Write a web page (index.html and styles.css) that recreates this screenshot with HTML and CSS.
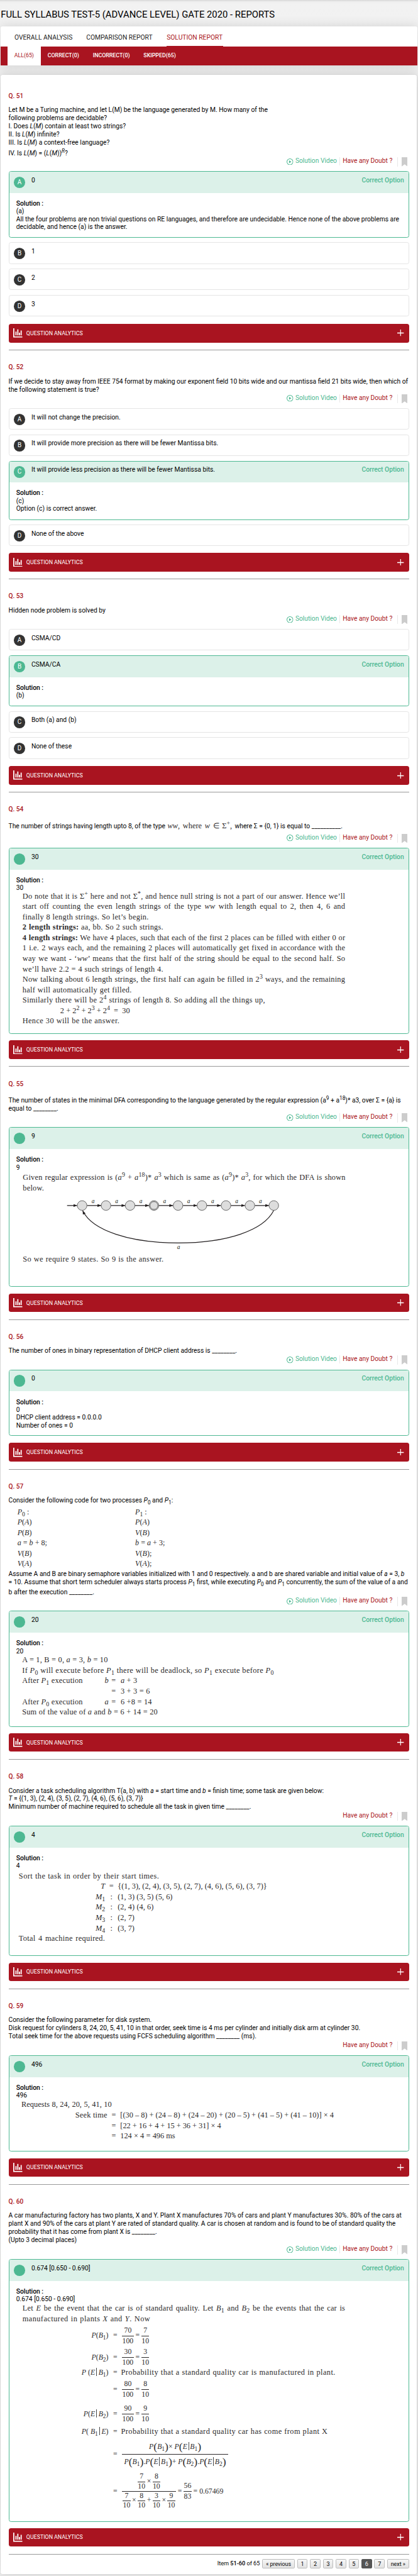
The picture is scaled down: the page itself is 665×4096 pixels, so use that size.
FILE: index.html
```html
<!DOCTYPE html>
<html lang="en">
<head>
<meta charset="utf-8">
<title>Full Syllabus Test-5 - Reports</title>
<link rel="stylesheet" href="styles.css">
</head>
<body>
<div class="page">
  <svg class="defs" width="0" height="0">
    <symbol id="play" viewBox="0 0 18 18"><circle cx="9" cy="9" r="8.1" fill="none" stroke="#4db892" stroke-width="1.7"/><path d="M6.6 5.2 12.8 9l-6.2 3.8z" fill="#4db892"/></symbol>
    <symbol id="mark" viewBox="0 0 16 25"><path d="M0 0h16v25l-8-6-8 6z" fill="#ccc"/></symbol>
    <symbol id="chart" viewBox="0 0 25 25"><path d="M0 0h3v22h22v3H0zM6 9h3v10H6zM11 3h3v16h-3zM15.500 12h3v7h-3zM20 6h3v13h-3z" fill="#fff"/></symbol>
    <symbol id="plus" viewBox="0 0 18 18"><path d="M8 0h2v8h8v2.500h-8V18H8v-7.500H0V8h8z" fill="#fff"/></symbol>
  </svg>
  <h1 class="title">FULL SYLLABUS TEST-5 (ADVANCE LEVEL) GATE 2020 - REPORTS</h1>
  <div class="tabs-card">
    <nav class="tabs"><a class="w1">OVERALL ANALYSIS</a><a class="w2">COMPARISON REPORT</a><a class="w3 active">SOLUTION REPORT</a></nav>
    <nav class="filters"><a class="active">ALL(65)</a><a>CORRECT(0)</a><a>INCORRECT(0)</a><a>SKIPPED(65)</a></nav>
  </div>
  <main class="card">

    <article class="question q51">
      <h2>Q. 51</h2>
      <div class="stem">
        <div>Let M be a Turing machine, and let L(M) be the language generated by M. How many of the</div>
        <div>following problems are decidable?</div>
        <div>I. Does <i>L</i>(<i>M</i>) contain at least two strings?</div>
        <div>II. Is <i>L</i>(<i>M</i>) infinite?</div>
        <div>III. Is <i>L</i>(<i>M</i>) a context-free language?</div>
        <div class="drop">IV. Is <i>L</i>(<i>M</i>) = (<i>L</i>(<i>M</i>))<sup><i>R</i></sup>?</div>
      </div>
      <div class="actions"><span class="video"><svg><use href="#play"/></svg>Solution Video</span><span class="doubt">Have any Doubt ?</span><span class="mark"><svg><use href="#mark"/></svg></span></div>
      <div class="options">
        <section class="option correct">
          <header><b class="dot">A</b><span>0</span><em>Correct Option</em></header>
          <div class="solution"><strong>Solution :</strong><div>(a)</div><div>All the four problems are non trivial questions on RE languages, and therefore are undecidable. Hence none of the above problems are</div><div>decidable, and hence (a) is the answer.</div></div>
        </section>
        <section class="option"><header><b class="dot">B</b><span>1</span></header></section>
        <section class="option"><header><b class="dot">C</b><span>2</span></header></section>
        <section class="option"><header><b class="dot">D</b><span>3</span></header></section>
      </div>
      <div class="analytics"><svg class="chart"><use href="#chart"/></svg><span>QUESTION ANALYTICS</span><svg class="plus"><use href="#plus"/></svg></div>
    </article>

    <article class="question q52">
      <h2>Q. 52</h2>
      <div class="stem">
        <div>If we decide to stay away from IEEE 754 format by making our exponent field 10 bits wide and our mantissa field 21 bits wide, then which of</div>
        <div>the following statement is true?</div>
      </div>
      <div class="actions"><span class="video"><svg><use href="#play"/></svg>Solution Video</span><span class="doubt">Have any Doubt ?</span><span class="mark"><svg><use href="#mark"/></svg></span></div>
      <div class="options">
        <section class="option"><header><b class="dot">A</b><span>It will not change the precision.</span></header></section>
        <section class="option"><header><b class="dot">B</b><span>It will provide more precision as there will be fewer Mantissa bits.</span></header></section>
        <section class="option correct">
          <header><b class="dot">C</b><span>It will provide less precision as there will be fewer Mantissa bits.</span><em>Correct Option</em></header>
          <div class="solution"><strong>Solution :</strong><div>(c)</div><div>Option (c) is correct answer.</div></div>
        </section>
        <section class="option"><header><b class="dot">D</b><span>None of the above</span></header></section>
      </div>
      <div class="analytics"><svg class="chart"><use href="#chart"/></svg><span>QUESTION ANALYTICS</span><svg class="plus"><use href="#plus"/></svg></div>
    </article>

    <article class="question q53">
      <h2>Q. 53</h2>
      <div class="stem"><div>Hidden node problem is solved by</div></div>
      <div class="actions"><span class="video"><svg><use href="#play"/></svg>Solution Video</span><span class="doubt">Have any Doubt ?</span><span class="mark"><svg><use href="#mark"/></svg></span></div>
      <div class="options">
        <section class="option"><header><b class="dot">A</b><span>CSMA/CD</span></header></section>
        <section class="option correct">
          <header><b class="dot">B</b><span>CSMA/CA</span><em>Correct Option</em></header>
          <div class="solution"><strong>Solution :</strong><div>(b)</div></div>
        </section>
        <section class="option"><header><b class="dot">C</b><span>Both (a) and (b)</span></header></section>
        <section class="option"><header><b class="dot">D</b><span>None of these</span></header></section>
      </div>
      <div class="analytics"><svg class="chart"><use href="#chart"/></svg><span>QUESTION ANALYTICS</span><svg class="plus"><use href="#plus"/></svg></div>
    </article>

    <article class="question q54">
      <h2>Q. 54</h2>
      <div class="stem"><div>The number of strings having length upto 8, of the type <span class="formula"><i>ww</i>, where <i>w</i> ∈ Σ<sup>+</sup>,</span> where Σ = {0, 1} is equal to __________.</div></div>
      <div class="actions"><span class="video"><svg><use href="#play"/></svg>Solution Video</span><span class="doubt">Have any Doubt ?</span><span class="mark"><svg><use href="#mark"/></svg></span></div>
      <div class="options">
        <section class="option correct">
          <header><b class="dot"></b><span>30</span><em>Correct Option</em></header>
          <div class="solution"><strong>Solution :</strong><div>30</div>
            <div class="working">
              <p class="full">Do note that it is Σ<sup>+</sup> here and not Σ<sup>*</sup>, and hence null string is not a part of our answer. Hence we’ll</p>
              <p class="full">start off counting the even length strings of the type <i>ww</i> with length equal to 2, then 4, 6 and</p>
              <p class="l3">finally 8 length strings. So let’s begin.</p>
              <p class="l4"><b>2 length strings:</b> aa, bb. So 2 such strings.</p>
              <p class="full tight"><b>4 length strings:</b> We have 4 places, such that each of the first 2 places can be filled with either 0 or</p>
              <p class="full">1 i.e. 2 ways each, and the remaining 2 places will automatically get fixed in accordance with the</p>
              <p class="full">way we want - ‘<i>ww</i>’ means that the first half of the string should be equal to the second half. So</p>
              <p class="l8">we’ll have 2.2 = 4 such strings of length 4.</p>
              <p class="full">Now talking about 6 length strings, the first half can again be filled in 2<sup>3</sup> ways, and the remaining</p>
              <p class="l10">half will automatically get filled.</p>
              <p class="l11">Similarly there will be 2<sup>4</sup> strings of length 8. So adding all the things up,</p>
              <p class="l12">2 + 2<sup>2</sup> + 2<sup>3</sup> + 2<sup>4</sup> &nbsp;=&nbsp; 30</p>
              <p class="l13">Hence 30 will be the answer.</p>
            </div>
          </div>
        </section>
      </div>
      <div class="analytics"><svg class="chart"><use href="#chart"/></svg><span>QUESTION ANALYTICS</span><svg class="plus"><use href="#plus"/></svg></div>
    </article>

    <article class="question q55">
      <h2>Q. 55</h2>
      <div class="stem"><div>The number of states in the minimal DFA corresponding to the language generated by the regular expression (a<sup>9</sup> + a<sup>18</sup>)* a3, over Σ = {a} is</div><div>equal to ________.</div></div>
      <div class="actions"><span class="video"><svg><use href="#play"/></svg>Solution Video</span><span class="doubt">Have any Doubt ?</span><span class="mark"><svg><use href="#mark"/></svg></span></div>
      <div class="options">
        <section class="option correct">
          <header><b class="dot"></b><span>9</span><em>Correct Option</em></header>
          <div class="solution"><strong>Solution :</strong><div>9</div>
            <div class="working">
              <p class="full">Given regular expression is (<i>a</i><sup>9</sup> + <i>a</i><sup>18</sup>)* <i>a</i><sup>3</sup> which is same as (<i>a</i><sup>9</sup>)* <i>a</i><sup>3</sup>, for which the DFA is shown</p>
              <p class="b1">below.</p>
              <svg class="dfa" viewBox="60 0 720 164">
                <defs><marker id="tip" viewBox="0 0 10 8" refX="10" refY="4" markerWidth="10" markerHeight="8" markerUnits="userSpaceOnUse" orient="auto"><path d="M0 0 10 4 0 8z" fill="#231f20"/></marker></defs>
                <g stroke="#231f20" stroke-width="2">
                  <path d="M180 32h27" marker-end="url(#tip)"/><path d="M234 32h38" marker-end="url(#tip)"/><path d="M298 32h39" marker-end="url(#tip)"/><path d="M363 32h38" marker-end="url(#tip)"/><path d="M428 32h38" marker-end="url(#tip)"/><path d="M493 32h38" marker-end="url(#tip)"/><path d="M557 32h38" marker-end="url(#tip)"/><path d="M622 32h38" marker-end="url(#tip)"/><path d="M687 32h38" marker-end="url(#tip)"/>
                  <path d="M738 45C710 100 610 133 480 133C350 133 248 100 222 46" fill="none" marker-end="url(#tip)"/>
                </g>
                <g fill="#ddd" stroke="#555" stroke-width="1.500">
                  <circle cx="220.500" cy="32" r="13"/><circle cx="285" cy="32" r="13"/><circle cx="350" cy="32" r="13"/><circle cx="414.500" cy="32" r="13"/><circle cx="414.500" cy="32" r="10.500"/><circle cx="479.500" cy="32" r="13"/><circle cx="544" cy="32" r="13"/><circle cx="609" cy="32" r="13"/><circle cx="673.500" cy="32" r="13"/><circle cx="738" cy="32" r="13"/>
                </g>
                <g class="edge"><text x="250" y="25">a</text><text x="314" y="25">a</text><text x="379" y="25">a</text><text x="443" y="25">a</text><text x="508" y="25">a</text><text x="573" y="25">a</text><text x="638" y="25">a</text><text x="702" y="25">a</text><text x="481" y="149">a</text></g>
              </svg>
              <p class="b2">So we require 9 states. So 9 is the answer.</p>
            </div>
          </div>
        </section>
      </div>
      <div class="analytics"><svg class="chart"><use href="#chart"/></svg><span>QUESTION ANALYTICS</span><svg class="plus"><use href="#plus"/></svg></div>
    </article>

    <article class="question q56">
      <h2>Q. 56</h2>
      <div class="stem"><div>The number of ones in binary representation of DHCP client address is ________.</div></div>
      <div class="actions"><span class="video"><svg><use href="#play"/></svg>Solution Video</span><span class="doubt">Have any Doubt ?</span><span class="mark"><svg><use href="#mark"/></svg></span></div>
      <div class="options">
        <section class="option correct">
          <header><b class="dot"></b><span>0</span><em>Correct Option</em></header>
          <div class="solution"><strong>Solution :</strong><div>0</div><div>DHCP client address = 0.0.0.0</div><div>Number of ones = 0</div></div>
        </section>
      </div>
      <div class="analytics"><svg class="chart"><use href="#chart"/></svg><span>QUESTION ANALYTICS</span><svg class="plus"><use href="#plus"/></svg></div>
    </article>

    <article class="question q57">
      <h2>Q. 57</h2>
      <div class="stem">
        <div>Consider the following code for two processes <i>P</i><sub>0</sub> and <i>P</i><sub>1</sub>:</div>
        <div class="code">
          <p><i>P</i><sub>0</sub> :</p><p><i>P</i><sub>1</sub> :</p>
          <p><i>P</i>(<i>A</i>)</p><p><i>P</i>(<i>A</i>)</p>
          <p><i>P</i>(<i>B</i>)</p><p><i>V</i>(<i>B</i>)</p>
          <p><i>a</i> = <i>b</i> + 8;</p><p><i>b</i> = <i>a</i> + 3;</p>
          <p><i>V</i>(<i>B</i>)</p><p><i>V</i>(<i>B</i>);</p>
          <p><i>V</i>(<i>A</i>)</p><p><i>V</i>(<i>A</i>);</p>
        </div>
        <div>Assume A and B are binary semaphore variables initialized with 1 and 0 respectively. a and b are shared variable and initial value of <i>a</i> = 3, <i>b</i></div>
        <div>= 10. Assume that short term scheduler always starts process <i>P</i><sub>1</sub> first, while executing <i>P</i><sub>0</sub> and <i>P</i><sub>1</sub> concurrently, the sum of the value of a and</div>
        <div class="drop">b after the execution ________.</div>
      </div>
      <div class="actions"><span class="video"><svg><use href="#play"/></svg>Solution Video</span><span class="doubt">Have any Doubt ?</span><span class="mark"><svg><use href="#mark"/></svg></span></div>
      <div class="options">
        <section class="option correct">
          <header><b class="dot"></b><span>20</span><em>Correct Option</em></header>
          <div class="solution"><strong>Solution :</strong><div>20</div>
            <div class="working">
              <p class="c1">A = 1, B = 0, <i>a</i> = 3, <i>b</i> = 10</p>
              <p class="c2">If <i>P</i><sub>0</sub> will execute before <i>P</i><sub>1</sub> there will be deadlock, so <i>P</i><sub>1</sub> execute before <i>P</i><sub>0</sub></p>
              <div class="steps"><span>After <i>P</i><sub>1</sub> execution</span><i>b</i><span>=</span><span><i>a</i> + 3</span></div>
              <div class="steps"><span></span><i></i><span>=</span><span>3 + 3 = 6</span></div>
              <div class="steps"><span>After <i>P</i><sub>0</sub> execution</span><i>a</i><span>=</span><span>6 +8 = 14</span></div>
              <p class="c6">Sum of the value of <i>a</i> and <i>b</i> = 6 + 14 = 20</p>
            </div>
          </div>
        </section>
      </div>
      <div class="analytics"><svg class="chart"><use href="#chart"/></svg><span>QUESTION ANALYTICS</span><svg class="plus"><use href="#plus"/></svg></div>
    </article>

    <article class="question q58">
      <h2>Q. 58</h2>
      <div class="stem">
        <div>Consider a task scheduling algorithm T(a, b) with <i>a</i> = start time and <i>b</i> = finish time; some task are given below:</div>
        <div><i>T</i> = {(1, 3), (2, 4), (3, 5), (2, 7), (4, 6), (5, 6), (3, 7)}</div>
        <div>Minimum number of machine required to schedule all the task in given time ________.</div>
      </div>
      <div class="actions"><span class="doubt">Have any Doubt ?</span><span class="mark"><svg><use href="#mark"/></svg></span></div>
      <div class="options">
        <section class="option correct">
          <header><b class="dot"></b><span>4</span><em>Correct Option</em></header>
          <div class="solution"><strong>Solution :</strong><div>4</div>
            <div class="working">
              <p class="d1">Sort the task in order by their start times.</p>
              <div class="sched"><span><i>T</i></span><span>=</span><p class="d2">{(1, 3), (2, 4), (3, 5), (2, 7), (4, 6), (5, 6), (3, 7)}</p></div>
              <div class="sched"><span><i>M</i><sub>1</sub></span><span>:</span><p class="d3">(1, 3) (3, 5) (5, 6)</p></div>
              <div class="sched"><span><i>M</i><sub>2</sub></span><span>:</span><p class="d4">(2, 4) (4, 6)</p></div>
              <div class="sched"><span><i>M</i><sub>3</sub></span><span>:</span><p>(2, 7)</p></div>
              <div class="sched"><span><i>M</i><sub>4</sub></span><span>:</span><p>(3, 7)</p></div>
              <p class="d7">Total 4 machine required.</p>
            </div>
          </div>
        </section>
      </div>
      <div class="analytics"><svg class="chart"><use href="#chart"/></svg><span>QUESTION ANALYTICS</span><svg class="plus"><use href="#plus"/></svg></div>
    </article>

    <article class="question q59">
      <h2>Q. 59</h2>
      <div class="stem">
        <div>Consider the following parameter for disk system.</div>
        <div>Disk request for cylinders 8, 24, 20, 5, 41, 10 in that order, seek time is 4 ms per cylinder and initially disk arm at cylinder 30.</div>
        <div>Total seek time for the above requests using FCFS scheduling algorithm ________ (ms).</div>
      </div>
      <div class="actions"><span class="doubt">Have any Doubt ?</span><span class="mark"><svg><use href="#mark"/></svg></span></div>
      <div class="options">
        <section class="option correct">
          <header><b class="dot"></b><span>496</span><em>Correct Option</em></header>
          <div class="solution"><strong>Solution :</strong><div>496</div>
            <div class="working">
              <p class="e1">Requests 8, 24, 20, 5, 41, 10</p>
              <div class="seek"><span>Seek time</span><span>=</span><p class="e2">[(30 – 8) + (24 – 8) + (24 – 20) + (20 – 5) + (41 – 5) + (41 – 10)] × 4</p></div>
              <div class="seek"><span></span><span>=</span><p class="e3">[22 + 16 + 4 + 15 + 36 + 31] × 4</p></div>
              <div class="seek"><span></span><span>=</span><p class="e4">124 × 4 = 496 ms</p></div>
            </div>
          </div>
        </section>
      </div>
      <div class="analytics"><svg class="chart"><use href="#chart"/></svg><span>QUESTION ANALYTICS</span><svg class="plus"><use href="#plus"/></svg></div>
    </article>

    <article class="question q60">
      <h2>Q. 60</h2>
      <div class="stem">
        <div>A car manufacturing factory has two plants, X and Y. Plant X manufactures 70% of cars and plant Y manufactures 30%. 80% of the cars at</div>
        <div>plant X and 90% of the cars at plant Y are rated of standard quality. A car is chosen at random and is found to be of standard quality the</div>
        <div>probability that it has come from plant X is ________.</div>
        <div>(Upto 3 decimal places)</div>
      </div>
      <div class="actions"><span class="video"><svg><use href="#play"/></svg>Solution Video</span><span class="doubt">Have any Doubt ?</span><span class="mark"><svg><use href="#mark"/></svg></span></div>
      <div class="options">
        <section class="option correct">
          <header><b class="dot"></b><span>0.674 [0.650 - 0.690]</span><em>Correct Option</em></header>
          <div class="solution"><strong>Solution :</strong><div>0.674 [0.650 - 0.690]</div>
            <div class="working">
              <p class="full">Let <i>E</i> be the event that the car is of standard quality. Let <i>B</i><sub>1</sub> and <i>B</i><sub>2</sub> be the events that the car is</p>
              <p class="f2">manufactured in plants <i>X</i> and <i>Y</i>. Now</p>
              <div class="proof">
                <span><i>P</i>(<i>B</i><sub>1</sub>)</span><span>=</span><div class="math"><span class="frac w31"><b>70</b><b>100</b></span>=<span class="frac"><b>7</b><b>10</b></span></div>
                <span><i>P</i>(<i>B</i><sub>2</sub>)</span><span>=</span><div class="math"><span class="frac w31"><b>30</b><b>100</b></span>=<span class="frac"><b>3</b><b>10</b></span></div>
                <span><i>P</i> (<i>E</i><u></u><i>B</i><sub>1</sub>)</span><span>=</span><p class="f3">Probability that a standard quality car is manufactured in plant.</p>
                <span></span><span>=</span><div class="math"><span class="frac w31"><b>80</b><b>100</b></span>=<span class="frac"><b>8</b><b>10</b></span></div>
                <span><i>P</i>(<i>E</i><u></u><i>B</i><sub>2</sub>)</span><span>=</span><div class="math"><span class="frac w31"><b>90</b><b>100</b></span>=<span class="frac"><b>9</b><b>10</b></span></div>
                <span><i>P</i>( <i>B</i><sub>1</sub><u></u><i>E</i>)</span><span>=</span><p class="f6">Probability that a standard quality car has come from plant X</p>
                <span></span><span>=</span><div class="math"><span class="frac bayes"><b><i>P</i><q>(</q><i>B</i><sub>1</sub><q>)</q>× <i>P</i><q>(</q><i>E</i><u></u><i>B</i><sub>1</sub><q>)</q></b><b><i>P</i><q>(</q><i>B</i><sub>1</sub><q>)</q>.<i>P</i><q>(</q><i>E</i><u></u><i>B</i><sub>1</sub><q>)</q>+ <i>P</i><q>(</q><i>B</i><sub>2</sub><q>)</q>.<i>P</i><q>(</q><i>E</i><u></u><i>B</i><sub>2</sub><q>)</q></b></span></div>
                <span></span><span>=</span><div class="math"><span class="frac nest"><b><span class="frac"><b>7</b><b>10</b></span>×<span class="frac"><b>8</b><b>10</b></span></b><b><span class="frac"><b>7</b><b>10</b></span>×<span class="frac"><b>8</b><b>10</b></span>+<span class="frac"><b>3</b><b>10</b></span>×<span class="frac"><b>9</b><b>10</b></span></b></span>=<span class="frac"><b>56</b><b>83</b></span>=<span>0.67469</span></div>
              </div>
            </div>
          </div>
        </section>
      </div>
      <div class="analytics"><svg class="chart"><use href="#chart"/></svg><span>QUESTION ANALYTICS</span><svg class="plus"><use href="#plus"/></svg></div>
    </article>

    <footer class="pager"><span>Item <b>51-60</b> of 65</span><a class="prev">« previous</a><a>1</a><a>2</a><a>3</a><a>4</a><a>5</a><a class="on">6</a><a>7</a><a class="next">next »</a></footer>
  </main>
</div>
</body>
</html>
```
FILE: styles.css
```css
* { box-sizing: border-box; }
html { background: #e4e4e4; }
body { margin: 0; }
.defs { display: block; position: absolute; }
.page { zoom: 0.5894; width: 1128px; height: 6948px; overflow: hidden; font-family: Roboto, sans-serif; color: #000; background: linear-gradient(#d6d6d6, #efefef 5px, #f2f2f2 12px, #efefef 200px); }
h1, h2, p { margin: 0; }
sup, sub { line-height: 0; font-size: 0.8em; }

.title { height: 72px; padding: 22px 0 0 2px; font-size: 25.2px; line-height: 34px; font-weight: 400; white-space: nowrap; }

.tabs-card { width: 1125px; height: 104px; margin-left: 1px; border-radius: 5px; background: #fff; box-shadow: 0 0 30px rgba(0,0,0,.13); }
.tabs { display: flex; height: 54px; padding: 0 38px; gap: 37px; font-size: 17.5px; font-weight: 400; line-height: 60px; white-space: nowrap; color: #222; }
.tabs .active { color: #a91420; border-bottom: 3px solid #a91420; }
.w1 { width: 157px; } .w2 { width: 180px; } .w3 { width: 153px; }
.filters { display: flex; height: 50px; padding-left: 19px; background: #a91420; color: #fff; font-size: 15px; font-weight: 500; line-height: 50px; }
.filters a { padding: 0 18.5px; }
.filters .active { background: #fff; color: #a91420; font-weight: 400; }

.card { width: 1123px; height: 6743px; margin: 26px 0 0 2px; padding: 0 21px; border-radius: 5px; background: #fff; box-shadow: 0 0 30px rgba(0,0,0,.15), 0 0 3px rgba(0,0,0,.12); }
.question { display: flex; flex-direction: column; border-bottom: 1.7px solid #999; padding-bottom: 20px; }
.question h2 { flex: none; height: 73.6px; padding-top: 34px; font-size: 17.2px; line-height: 24px; font-weight: 500; color: #a91420; }
.stem { flex: none; font-size: 17.5px; line-height: 22px; white-space: nowrap; }
.stem > div { height: 22px; }
.stem .drop { margin-top: 6px; }

.q51 { height: 743.6px; } .q51 h2 { height: 85.5px; padding-top: 45px; } .q51 .stem { height: 136.5px; }
.q52 { height: 617.8px; } .q52 .stem { height: 44px; }
.q53 { height: 575.1px; } .q53 .stem { height: 22px; }
.q54 { height: 739.9px; } .q54 .stem { height: 37px; padding-top: 6px; }
.q55 { height: 683.1px; } .q55 .stem { height: 51.2px; padding-top: 7px; }
.q56 { height: 403.1px; } .q56 .stem { height: 22px; }
.q57 { height: 783px; } .q57 .stem { height: 269.7px; }
.q58 { height: 619px; } .q58 .stem { height: 66.5px; }
.q59 { height: 527.7px; } .q59 .stem { height: 66.5px; }
.q60 { height: 997.4px; } .q60 .stem { height: 89px; }

.actions { flex: none; display: flex; justify-content: flex-end; height: 38px; padding-right: 4px; font-size: 17.4px; line-height: 22px; white-space: nowrap; }
.video { display: flex; gap: 5px; height: 22px; padding-right: 7px; border-right: 1px solid #e8e8e8; color: #4db892; }
.video svg { width: 18px; height: 18px; margin-top: 3px; }
.doubt { width: 156px; height: 25px; padding-left: 7px; border-right: 1px solid #e8e8e8; color: #a91420; }
.mark { margin-left: 10px; }
.mark svg { display: block; width: 16px; height: 25px; }

.options { display: flex; flex-direction: column; gap: 13px; }
.option { height: 58px; border: 1px solid #e5e5e5; border-radius: 6px; overflow: hidden; }
.option header { display: flex; height: 57px; padding: 13px 12px 0; font-size: 17.5px; line-height: 22px; white-space: nowrap; }
.option header span { margin-left: 16px; }
.dot { flex: none; width: 32px; height: 31px; border-radius: 50%; background: #333; color: #fff; text-align: center; font-size: 17px; font-weight: 400; line-height: 32px; }
.option em { margin-left: auto; font-style: normal; font-weight: 500; color: #4db892; }
.correct { border-color: #4db892; }
.correct header { background: #dcf1e9; }
.correct .dot { background: #4db892; }
.q51 .correct { height: 179px; } .q52 .correct { height: 159.4px; } .q53 .correct { height: 137.4px; }
.q54 .correct { height: 502.3px; } .q55 .correct { height: 431px; } .q56 .correct { height: 179.1px; }
.q57 .correct { height: 313.3px; } .q58 .correct { height: 351px; } .q59 .correct { height: 259px; } .q60 .correct { height: 708.3px; }
.solution { padding: 19px 0 0 19px; font-size: 17.5px; line-height: 21px; white-space: nowrap; }
.solution strong { display: block; font-weight: 500; }

.analytics { flex: none; display: flex; align-items: center; height: 50px; margin-top: auto; padding: 0 13px; border-radius: 6px; background: #a91420; color: #fff; font-size: 15px; }
.chart { width: 25px; height: 25px; margin-right: 10px; }
.plus { width: 18px; height: 18px; margin-left: auto; }

.working, .code, .formula { font-family: "Liberation Serif", serif; color: #2c2a2b; }
.working { margin-left: 17px; font-size: 21px; line-height: 28.1px; letter-spacing: .35px; }
.working p { height: 28.1px; text-align-last: justify; }
.working .full { width: 871px; }
.working .tight { letter-spacing: .2px; }
.formula { display: inline-block; width: 174px; margin: 0 3px 0 2px; font-size: 21px; text-align-last: justify; }

.q54 .working { margin-top: -3px; }
.l3 { width: 341px; letter-spacing: .5px; } .l4 { width: 380px; } .l8 { width: 380px; } .l10 { width: 295px; letter-spacing: .5px; } .l11 { width: 655px; letter-spacing: .5px; }
.working .l12 { width: 185px; margin-left: 102px; letter-spacing: 0; } .l13 { width: 262px; letter-spacing: .6px; }
.q55 .working { margin-left: 18px; margin-top: 1px; line-height: 29px; }
.q55 .working p, .q60 .working p { height: 29px; }
.b1 { width: 62px; } .b2 { width: 380px; letter-spacing: .5px; }
.dfa { display: block; width: 720px; height: 164px; margin-left: -1px; letter-spacing: 0; }
.edge { font: italic 16px "Liberation Serif", serif; text-anchor: middle; fill: #231f20; }

.code { display: grid; grid-template-columns: 318px 200px; grid-auto-rows: 28px; padding-left: 24px; margin: 5px 0 3px; font-size: 20.5px; line-height: 28px; }
.stem .code { height: 168px; }
.c1 { width: 222px; } .c2 { width: 669px; letter-spacing: .6px; } .c6 { width: 365px; }
.q57 .working { margin-left: 16px; margin-top: -1px; }
.steps { display: grid; grid-template-columns: 223px 18px 25px 200px; height: 28.1px; }

.q58 .working { margin-left: 7px; margin-top: 2px; }
.d1 { width: 379px; letter-spacing: .7px; } .d2 { width: 403px; } .d3 { width: 148px; } .d4 { width: 97px; } .d7 { width: 233px; letter-spacing: .5px; }
.sched { display: grid; grid-template-columns: 233px 34px auto; justify-content: start; letter-spacing: 0; }
.sched > span { text-align: right; } .sched > span + span { text-align: center; }

.q59 .working { margin-left: 14px; }
.e1 { width: 244px; letter-spacing: .1px; } .e2 { width: 576px; letter-spacing: -.05px; } .e3 { width: 272px; letter-spacing: -.1px; } .e4 { width: 148px; letter-spacing: -.1px; }
.seek { display: grid; grid-template-columns: 232px 35px auto; justify-content: start; }
.seek > span { text-align: right; } .seek > span + span { text-align: center; }

.q60 .working { margin-left: 17px; margin-top: -2px; line-height: 29px; }
.f2 { width: 345px; letter-spacing: .7px; }
.proof { display: grid; grid-template-columns: 232px 37px auto; grid-template-rows: 62px 54px 29px 63px 69px 26px 97px 101px; align-items: center; justify-content: start; font-size: 20px; letter-spacing: 0; }
.proof > span { text-align: right; } .proof > span + span { text-align: center; }
.proof p { font-size: 21px; margin-left: -3px; letter-spacing: .7px; }
.f3 { width: 579px; } .f6 { width: 558px; }
.proof u { display: inline-block; width: 1.5px; height: 23px; margin: 0 4px; background: #444; vertical-align: -4px; }
.math { display: flex; align-items: center; gap: 5px; }
.frac { display: inline-flex; flex-direction: column; align-items: center; min-width: 21px; }
.frac > b { font-weight: 400; line-height: 27px; }
.frac > b + b { align-self: stretch; text-align: center; border-top: 1.7px solid #2c2a2b; }
.w31 { width: 31px; }
.bayes { width: 286px; }
.bayes > b, .bayes > b + b { line-height: 40px; white-space: nowrap; }
.bayes u { margin: 0 3px; }
.proof q { quotes: none; font-size: 30px; line-height: 0; vertical-align: -3px; }
.proof q::before, .proof q::after { content: none; }
.nest { width: 145px; }
.nest > b, .nest > b + b { display: flex; justify-content: center; align-items: center; gap: 4px; line-height: 27px; }
.nest .frac > b { line-height: 24px; }

.pager { display: flex; justify-content: flex-end; gap: 6.5px; padding-top: 12px; font-size: 15.5px; line-height: 26px; white-space: nowrap; }
.pager a { width: 28.2px; height: 25px; border: 1px solid #bbb; border-radius: 3px; background: linear-gradient(#f6f6f6, #e2e2e2); text-align: center; line-height: 25px; }
.pager .prev { width: 88px; font-size: 15px; } .pager .next { width: 59px; font-size: 15px; }
.pager .on { background: #555; border-color: #555; color: #fff; }
.pager b { font-weight: 500; }
```
